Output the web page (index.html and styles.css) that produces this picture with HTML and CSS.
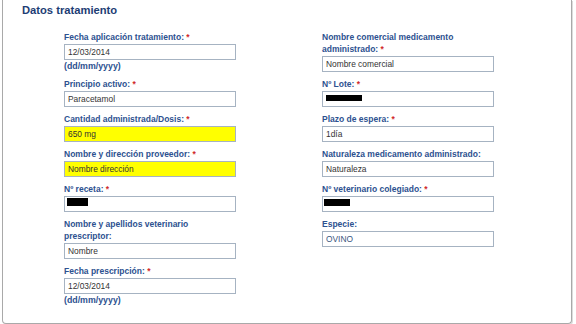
FILE: index.html
```html
<!DOCTYPE html>
<html lang="es">
<head>
<meta charset="UTF-8" />
<meta name="viewport" content="width=device-width, initial-scale=1" />
<title>Datos tratamiento</title>
<link rel="stylesheet" href="styles.css">
</head>
<body>

<div class="panel">
  <h3 class="panel-title">Datos tratamiento</h3>

  <form class="form-grid">
    <div class="col">
      <div class="field">
        <label for="fechaApl">Fecha aplicación tratamiento: <span class="req">*</span></label>
        <input type="text" id="fechaApl" value="12/03/2014" />
        <div class="hint">(dd/mm/yyyy)</div>
      </div>
      <div class="field">
        <label for="principio">Principio activo: <span class="req">*</span></label>
        <input type="text" id="principio" value="Paracetamol" />
      </div>
      <div class="field">
        <label for="dosis">Cantidad administrada/Dosis: <span class="req">*</span></label>
        <input type="text" id="dosis" class="highlight" value="650 mg" />
      </div>
      <div class="field">
        <label for="proveedor">Nombre y dirección proveedor: <span class="req">*</span></label>
        <input type="text" id="proveedor" class="highlight" value="Nombre dirección" />
      </div>
      <div class="field">
        <label for="receta">Nº receta: <span class="req">*</span></label>
        <div class="input-wrap">
          <input type="text" id="receta" value="" />
          <span class="redact redact-receta"></span>
        </div>
      </div>
      <div class="field">
        <label for="veterinario">Nombre y apellidos veterinario prescriptor:</label>
        <input type="text" id="veterinario" value="Nombre" />
      </div>
      <div class="field last">
        <label for="fechaPres">Fecha prescripción: <span class="req">*</span></label>
        <input type="text" id="fechaPres" value="12/03/2014" />
        <div class="hint">(dd/mm/yyyy)</div>
      </div>
    </div>

    <div class="col">
      <div class="field">
        <label for="comercial">Nombre comercial medicamento administrado: <span class="req">*</span></label>
        <input type="text" id="comercial" value="Nombre comercial" />
      </div>
      <div class="field">
        <label for="lote">Nº Lote: <span class="req">*</span></label>
        <div class="input-wrap">
          <input type="text" id="lote" value="" />
          <span class="redact redact-lote"></span>
        </div>
      </div>
      <div class="field">
        <label for="plazo">Plazo de espera: <span class="req">*</span></label>
        <input type="text" id="plazo" value="1día" />
      </div>
      <div class="field">
        <label for="naturaleza">Naturaleza medicamento administrado:</label>
        <input type="text" id="naturaleza" value="Naturaleza" />
      </div>
      <div class="field">
        <label for="colegiado">Nº veterinario colegiado: <span class="req">*</span></label>
        <div class="input-wrap">
          <input type="text" id="colegiado" value="" />
          <span class="redact redact-colegiado"></span>
        </div>
      </div>
      <div class="field">
        <label for="especie">Especie:</label>
        <input type="text" id="especie" class="readonly" value="OVINO" readonly />
      </div>
    </div>
  </form>
</div>

</body>
</html>
```

FILE: styles.css
```css
body { margin: 0; background: #fff; font-family: "Liberation Sans", Arial, sans-serif; }

.panel {
  margin: 0 4px 0 2px;
  padding: 3px 0 17px 0;
  border: 1px solid #a9a9a9;
  border-top: none;
  border-radius: 0 0 4px 4px;
  box-shadow: 1px 1px 0 #dcdcdc;
}
.panel-title {
  margin: 0 0 14px 19px;
  font-size: 11.2px;
  line-height: 14px;
  font-weight: bold;
  color: #1d3d74;
}

.form-grid {
  display: grid;
  grid-template-columns: 258px 1fr;
  padding-left: 61px;
}
.col { width: 172px; }

.field { margin-bottom: 6.5px; }
.field.last { margin-bottom: 0; }
.field label {
  display: block;
  margin-bottom: 0.5px;
  font-size: 8.5px;
  line-height: 12px;
  font-weight: bold;
  color: #2d5190;
}
.req { color: #d12b2b; }
.hint {
  font-size: 8.8px;
  line-height: 12px;
  font-weight: bold;
  color: #2d5190;
}

input {
  display: block;
  width: 100%;
  height: 16px;
  box-sizing: border-box;
  margin: 0;
  padding: 0 3px;
  border: 1px solid #a6b3c2;
  background: #fff;
  font-family: "Liberation Sans", Arial, sans-serif;
  font-size: 8.4px;
  color: #333;
}
input.highlight { background: #ffff00; }
input.readonly { color: #3a5680; }

.input-wrap { position: relative; }
.redact { position: absolute; background: #000; }
.redact-receta { left: 3px; top: 2px; width: 21px; height: 8px; }
.redact-lote { left: 4px; top: 4px; width: 36px; height: 6px; }
.redact-colegiado { left: 2px; top: 3px; width: 26px; height: 7px; }
```
